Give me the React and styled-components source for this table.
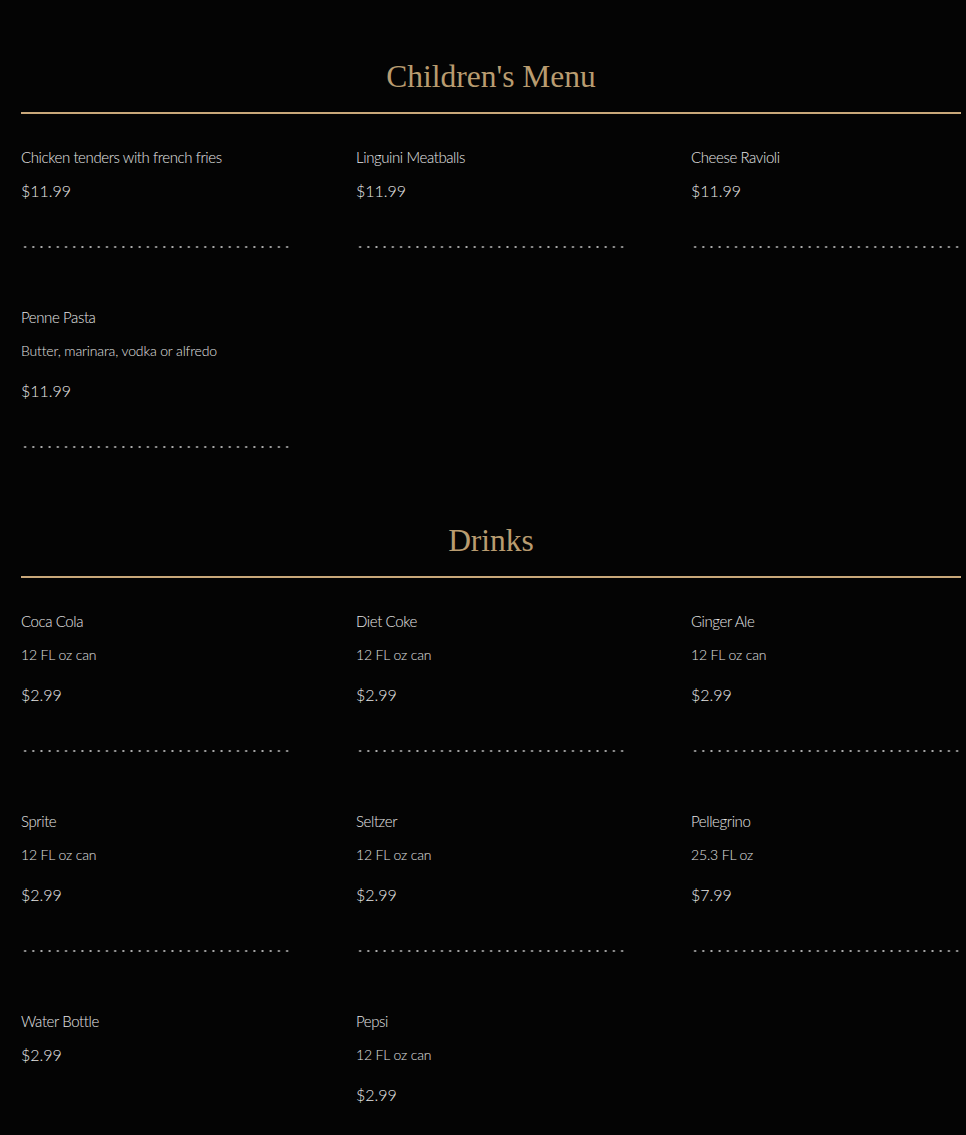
import React from "react";
import styled, { createGlobalStyle } from "styled-components";

const Global = createGlobalStyle`
  html, body { margin: 0; padding: 0; background: #040404; }
  body { font-family: "Lato", "DejaVu Sans", sans-serif; }
`;

const Page = styled.main`
  width: 940px;
  padding: 0 0 40px 21px;
  background: #040404;
  min-height: 1135px;
  box-sizing: content-box;
`;

const Section = styled.section`
  padding-top: ${(p) => p.$top}px;
`;

const Heading = styled.h2`
  margin: 0;
  height: 56px;
  line-height: 42px;
  text-align: center;
  font-family: "Liberation Serif", "DejaVu Serif", serif;
  font-weight: 400;
  font-size: 31.5px;
  color: #b99c70;
  border-bottom: 2px solid #c9a87a;
`;

const Grid = styled.div`
  display: grid;
  grid-template-columns: repeat(3, 270px);
  column-gap: 65px;
  row-gap: 59px;
  align-items: start;
  padding-top: 33px;
`;

const Item = styled.div`
  display: flex;
  flex-direction: column;
`;

const Name = styled.div`
  font-size: 15px;
  line-height: 20px;
  font-weight: 300;
  letter-spacing: -0.4px;
  color: #e6e6e6;
  margin-bottom: 14px;
  white-space: nowrap;
`;

const Desc = styled.div`
  font-size: 14px;
  line-height: 20px;
  font-weight: 300;
  letter-spacing: -0.15px;
  color: #e0e0e0;
  margin-bottom: 20px;
  white-space: nowrap;
`;

const Price = styled.div`
  font-size: 16px;
  line-height: 20px;
  font-weight: 300;
  color: #e6e6e6;
`;

const Dots = styled.div`
  margin-top: 45px;
  height: 2px;
  width: 270px;
  background-image: radial-gradient(circle, #b0b0b0 0.9px, transparent 1.2px);
  background-size: 8.2px 2px;
  background-repeat: repeat-x;
`;

const children = [
  { name: "Chicken tenders with french fries", price: "$11.99" },
  { name: "Linguini Meatballs", price: "$11.99" },
  { name: "Cheese Ravioli", price: "$11.99" },
  { name: "Penne Pasta", desc: "Butter, marinara, vodka or alfredo", price: "$11.99" },
];

const drinks = [
  { name: "Coca Cola", desc: "12 FL oz can", price: "$2.99" },
  { name: "Diet Coke", desc: "12 FL oz can", price: "$2.99" },
  { name: "Ginger Ale", desc: "12 FL oz can", price: "$2.99" },
  { name: "Sprite", desc: "12 FL oz can", price: "$2.99" },
  { name: "Seltzer", desc: "12 FL oz can", price: "$2.99" },
  { name: "Pellegrino", desc: "25.3 FL oz", price: "$7.99" },
  { name: "Water Bottle", price: "$2.99", noDots: true },
  { name: "Pepsi", desc: "12 FL oz can", price: "$2.99", noDots: true },
];

function MenuItem({ item }) {
  return (
    <Item>
      <Name>{item.name}</Name>
      {item.desc && <Desc>{item.desc}</Desc>}
      <Price>{item.price}</Price>
      {!item.noDots && <Dots />}
    </Item>
  );
}

export default function App() {
  return (
    <>
      <Global />
      <Page>
        <Section $top={56}>
          <Heading>Children's Menu</Heading>
          <Grid>
            {children.map((it) => (
              <MenuItem key={it.name} item={it} />
            ))}
          </Grid>
        </Section>
        <Section $top={72}>
          <Heading>Drinks</Heading>
          <Grid>
            {drinks.map((it) => (
              <MenuItem key={it.name} item={it} />
            ))}
          </Grid>
        </Section>
      </Page>
    </>
  );
}
